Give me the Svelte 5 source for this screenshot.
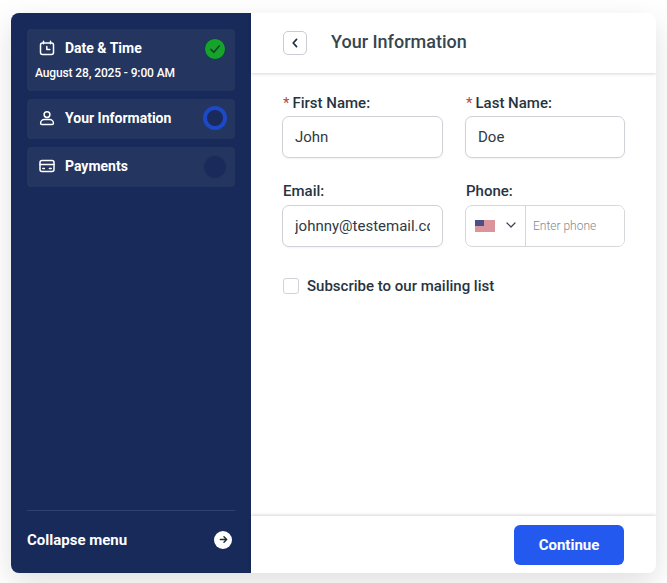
<script>
  let firstName = $state("John");
  let lastName = $state("Doe");
  let email = $state("johnny@testemail.com");
  let phone = $state("");
  let subscribe = $state(false);
</script>

<div class="page">
  <div class="card">
    <aside class="side">
      <div class="steps">
        <div class="step">
          <div class="step-row first">
            <svg class="ico" viewBox="0 0 16 16" fill="none" stroke="#fff" stroke-width="1.5" stroke-linecap="round" stroke-linejoin="round">
              <rect x="1.5" y="3" width="13" height="11.5" rx="2" />
              <path d="M4.5 1.2v2.6M11.5 1.2v2.6M7.8 6.5v3h3" />
            </svg>
            <span class="step-name">Date &amp; Time</span>
            <span class="dot done">
              <svg viewBox="0 0 12 12" fill="none" stroke="#14432d" stroke-width="1.4" stroke-linecap="round" stroke-linejoin="round"><path d="M2.5 6.3 5 8.8 9.6 3.4" /></svg>
            </span>
          </div>
          <div class="step-sub">August 28, 2025 - 9:00 AM</div>
        </div>
        <div class="step">
          <div class="step-row">
            <svg class="ico" viewBox="0 0 16 16" fill="none" stroke="#fff" stroke-width="1.5" stroke-linecap="round" stroke-linejoin="round">
              <circle cx="8" cy="4.6" r="2.9" />
              <path d="M1.6 13.2c0-2.4 2-3.6 3.6-3.6h5.6c1.6 0 3.6 1.2 3.6 3.6 0 .9-.6 1.3-1.3 1.3H2.9c-.7 0-1.3-.4-1.3-1.3z" />
            </svg>
            <span class="step-name">Your Information</span>
            <span class="dot active"></span>
          </div>
        </div>
        <div class="step">
          <div class="step-row">
            <svg class="ico" viewBox="0 0 16 16" fill="none" stroke="#fff" stroke-width="1.5" stroke-linecap="round" stroke-linejoin="round">
              <rect x="1" y="2.5" width="14" height="11" rx="2" />
              <path d="M1 6.5h14M3.8 10.5h1.6M10.4 10.5h1.8" />
            </svg>
            <span class="step-name">Payments</span>
            <span class="dot idle"></span>
          </div>
        </div>
      </div>

      <div class="collapse">
        <span>Collapse menu</span>
        <span class="collapse-btn">
          <svg viewBox="0 0 12 12" fill="none" stroke="#1f2937" stroke-width="1.5" stroke-linecap="round" stroke-linejoin="round"><path d="M2.5 6h7M6.5 3l3 3-3 3" /></svg>
        </span>
      </div>
    </aside>

    <main class="content">
      <header class="top">
        <button class="back" aria-label="Back">
          <svg viewBox="0 0 10 10" fill="none" stroke="#1f2d3a" stroke-width="1.4" stroke-linecap="round" stroke-linejoin="round"><path d="M6.3 2 3.5 5l2.8 3" /></svg>
        </button>
        <h1>Your Information</h1>
      </header>

      <form class="form">
        <div class="grid">
          <label class="field">
            <span class="lbl"><i>*</i>First Name:</span>
            <input type="text" bind:value={firstName} />
          </label>
          <label class="field">
            <span class="lbl"><i>*</i>Last Name:</span>
            <input type="text" bind:value={lastName} />
          </label>
          <label class="field">
            <span class="lbl tight">Email:</span>
            <input type="text" bind:value={email} />
          </label>
          <div class="field">
            <span class="lbl tight">Phone:</span>
            <div class="phone">
              <div class="country">
                <svg class="flag" viewBox="0 0 20 12" preserveAspectRatio="none">
                  <rect width="20" height="12" fill="#f0d8da" />
                  <path d="M0 1h20M0 3h20M0 5h20M0 7h20M0 9h20M0 11h20" stroke="#c2505f" stroke-width="1" />
                  <rect width="9" height="6" fill="#4a4f85" />
                </svg>
                <svg class="chev" viewBox="0 0 10 6" fill="none" stroke="#374151" stroke-width="1.2" stroke-linecap="round" stroke-linejoin="round"><path d="M1 1l4 4 4-4" /></svg>
              </div>
              <input type="text" placeholder="Enter phone" bind:value={phone} />
            </div>
          </div>
        </div>

        <label class="check">
          <input type="checkbox" bind:checked={subscribe} />
          <span>Subscribe to our mailing list</span>
        </label>
      </form>

      <footer class="foot">
        <button class="continue" type="button">Continue</button>
      </footer>
    </main>
  </div>
</div>

<style>
  :global(body) { margin:0; background:#fff; font-family:Roboto, "Liberation Sans", sans-serif; }
  .page { width:667px; height:583px; padding:13px 11px 10px; box-sizing:border-box; overflow:hidden; }
  .card { display:flex; height:560px; background:#fff; border-radius:8px; box-shadow:0 10px 30px rgba(0,0,0,.13); overflow:hidden; }

  .side { width:240px; flex-shrink:0; box-sizing:border-box; padding:16px 16px 0; background:#172a5a; display:flex; flex-direction:column; color:#fff; }
  .steps { display:flex; flex-direction:column; gap:8px; flex:1; }
  .step { background:#24355f; border-radius:4px; padding:0 9px 0 8px; }
  .step-row { display:flex; align-items:center; height:40px; box-sizing:border-box; padding-bottom:2px; }
  .step-row.first { height:38px; padding-bottom:0; }
  .ico { width:16px; height:16px; margin:0 10px 0 4px; flex-shrink:0; }
  .step-name { font-size:14px; font-weight:700; flex:1; }
  .dot { width:22px; height:22px; box-sizing:border-box; border-radius:50%; background:#1a2a5a; border:1px solid #24355f; display:flex; align-items:center; justify-content:center; }
  .dot.done { background:#16a32a; border:1px solid #16355c; margin-top:2px; }
  .dot.done svg { width:14px; height:14px; }
  .dot.active { width:24px; height:24px; margin-right:-1px; border:4px solid #1d48c7; }
  .dot.idle { width:24px; height:24px; margin-right:-1px; margin-top:2px; }
  .step-sub { font-size:12px; font-weight:500; letter-spacing:-.12px; line-height:14px; padding-bottom:11px; margin-top:-1px; }

  .collapse { height:63px; border-top:1px solid #2e4170; display:flex; align-items:center; justify-content:space-between; font-size:15px; font-weight:700; padding-right:3px; padding-bottom:5px; box-sizing:border-box; }
  .collapse-btn { width:18px; height:18px; border-radius:50%; background:#fff; display:flex; align-items:center; justify-content:center; }
  .collapse-btn svg { width:11px; height:11px; }

  .content { flex:1; display:flex; flex-direction:column; min-width:0; }
  .top { height:60px; display:flex; align-items:center; padding:0 32px; gap:24px; box-shadow:0 1px 3px rgba(0,0,0,.16); flex-shrink:0; }
  .back { width:24px; height:24px; padding:0; background:#fff; border:1px solid #c9ccd0; border-radius:5px; display:flex; align-items:center; justify-content:center; }
  .back svg { width:12px; height:12px; }
  h1 { margin:0 0 3px; font-size:18px; font-weight:500; color:#36454f; }

  .form { flex:1; padding:22px 31px 0; }
  .grid { display:grid; grid-template-columns:161px 160px; column-gap:22px; row-gap:25px; }
  .field { display:flex; flex-direction:column; gap:5px; }
  .lbl { font-size:15px; font-weight:500; color:#27343f; line-height:16px; padding-left:1px; }
  .lbl.tight { margin-bottom:1px; }
  .lbl i { font-style:normal; font-weight:400; color:#b4483f; margin-right:3px; }
  input[type="text"] { box-sizing:border-box; height:42px; width:100%; border:1px solid #cfd2d6; border-radius:7px; padding:0 12px; font:400 15px Roboto, sans-serif; color:#2f3a44; background:#fff; outline:none; box-shadow:0 1px 2px rgba(0,0,0,.05); }

  .phone { display:flex; height:42px; box-sizing:border-box; border:1px solid #d5d8db; border-radius:7px; overflow:hidden; }
  .country { width:60px; flex-shrink:0; border-right:1px solid #d5d8db; display:flex; align-items:center; box-sizing:border-box; padding-left:9px; }
  .flag { width:20px; height:12px; }
  .chev { width:10px; height:6px; margin-left:11px; margin-top:-3px; }
  .phone input[type="text"] { height:100%; border:none; border-radius:0; box-shadow:none; padding:0 7px; font-size:12px; font-weight:300; min-width:0; }
  .phone input::placeholder { color:#83898f; opacity:1; }

  .check { display:flex; align-items:center; gap:8px; margin-top:30px; font-size:15px; font-weight:500; color:#27343f; padding-left:1px; }
  .check input { appearance:none; margin:0; width:16px; height:16px; border:1px solid #d0d3d7; border-radius:3px; background:#fff; }

  .foot { height:57px; flex-shrink:0; box-shadow:0 -1px 3px rgba(0,0,0,.16); display:flex; align-items:center; justify-content:flex-end; padding:0 32px 0 0; }
  .continue { width:110px; height:40px; border:none; border-radius:6px; background:#2459ef; color:#fff; font:700 15px Roboto, sans-serif; }
</style>
